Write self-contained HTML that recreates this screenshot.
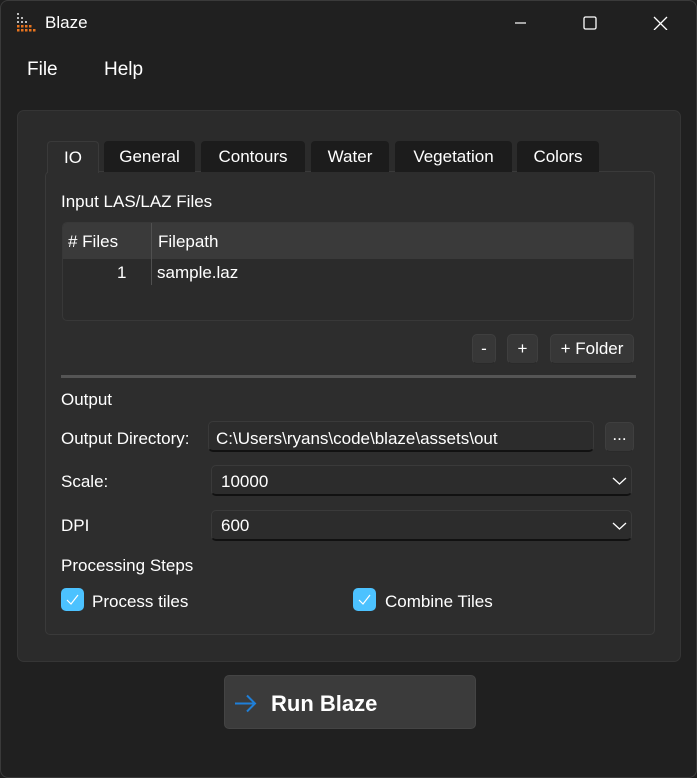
<!DOCTYPE html>
<html><head><style>
*{box-sizing:border-box;margin:0;padding:0}
body{width:697px;height:778px;background:#1f1f1f;font-family:"Liberation Sans",sans-serif;color:#fff;font-size:17px;position:relative;overflow:hidden}
.a{position:absolute}
.t{position:absolute;line-height:1;white-space:nowrap}
.win{left:0;top:0;width:697px;height:778px;border:1px solid #3a3a3a;border-radius:8px;background:#202020}
.tab{position:absolute;top:141px;height:31px;background:#1c1c1c;border-radius:4px 4px 0 0;text-align:center;line-height:31px;font-size:17px;color:#fff}
.btn{position:absolute;background:#373737;border:1px solid #3f3f3f;border-bottom-color:#2a2a2a;border-radius:5px;text-align:center;color:#fff}
.combo{position:absolute;background:#2c2c2c;border:1px solid #3a3a3a;border-bottom:2px solid #111;border-radius:5px}
.chk{position:absolute;width:23px;height:23px;background:#4cc2ff;border-radius:5px}
</style></head><body>
<div class="a win"></div>
<svg class="a" style="left:15px;top:12px" width="22" height="22" viewBox="0 0 22 22">
<g fill="#bbb"><rect x="2" y="1" width="2" height="2"/><rect x="2" y="5" width="2" height="2"/><rect x="6" y="5" width="2" height="2"/><rect x="2" y="9" width="2" height="2"/><rect x="6" y="9" width="2" height="2"/><rect x="10" y="9" width="2" height="2"/></g>
<g fill="#e8731e"><rect x="2" y="13" width="2.5" height="2.5"/><rect x="6" y="13" width="2.5" height="2.5"/><rect x="10" y="13" width="2.5" height="2.5"/><rect x="14" y="13" width="2.5" height="2.5"/><rect x="2" y="17" width="2.5" height="2.5"/><rect x="6" y="17" width="2.5" height="2.5"/><rect x="10" y="17" width="2.5" height="2.5"/><rect x="14" y="17" width="2.5" height="2.5"/><rect x="18" y="17" width="2.5" height="2.5"/></g></svg>
<div class="t" style="left:45px;top:14px;font-size:17px">Blaze</div>
<svg class="a" style="left:512px;top:16px" width="160" height="14"><line x1="3" y1="7" x2="14" y2="7" stroke="#fff" stroke-width="1.2"/><rect x="72" y="1" width="12" height="12" rx="1.5" fill="none" stroke="#fff" stroke-width="1.3"/><path d="M142 1 L155 14 M155 1 L142 14" stroke="#fff" stroke-width="1.3"/></svg>
<div class="t" style="left:27px;top:60px;font-size:19px">File</div>
<div class="t" style="left:104px;top:60px;font-size:19px">Help</div>
<div class="a" style="left:17px;top:110px;width:664px;height:552px;background:#2b2b2b;border:1px solid #353535;border-radius:7px"></div>
<div class="a" style="left:45px;top:171px;width:610px;height:464px;background:#2d2d2d;border:1px solid #3a3a3a;border-radius:5px"></div>
<div class="tab" style="left:47px;width:52px;background:#2d2d2d;border:1px solid #3a3a3a;border-bottom:none;height:32px">IO</div>
<div class="tab" style="left:104px;width:91px">General</div>
<div class="tab" style="left:201px;width:104px">Contours</div>
<div class="tab" style="left:311px;width:78px">Water</div>
<div class="tab" style="left:395px;width:117px">Vegetation</div>
<div class="tab" style="left:517px;width:82px">Colors</div>
<div class="t" style="left:61px;top:193px">Input LAS/LAZ Files</div>
<div class="a" style="left:62px;top:222px;width:572px;height:99px;background:#2b2b2b;border:1px solid #383838;border-radius:5px;overflow:hidden">
<div class="a" style="left:0;top:0;width:572px;height:36px;background:#3a3a3a"></div>
<div class="a" style="left:88px;top:0;width:1px;height:62px;background:#505050"></div>
</div>
<div class="t" style="left:68px;top:233px">#&nbsp;Files</div>
<div class="t" style="left:158px;top:233px">Filepath</div>
<div class="t" style="left:117px;top:264px">1</div>
<div class="t" style="left:157px;top:264px">sample.laz</div>
<div class="btn" style="left:472px;top:334px;width:24px;height:30px;line-height:28px">-</div>
<div class="btn" style="left:507px;top:334px;width:31px;height:30px;line-height:28px">+</div>
<div class="btn" style="left:550px;top:334px;width:84px;height:30px;line-height:28px;font-size:17px">+ Folder</div>
<div class="a" style="left:61px;top:375px;width:575px;height:3px;background:#555"></div>
<div class="t" style="left:61px;top:391px">Output</div>
<div class="t" style="left:61px;top:430px">Output Directory:</div>
<div class="combo" style="left:208px;top:421px;width:386px;height:31px"></div>
<div class="t" style="left:216px;top:430px">C:\Users\ryans\code\blaze\assets\out</div>
<div class="btn" style="left:605px;top:422px;width:29px;height:30px;line-height:24px">...</div>
<div class="t" style="left:61px;top:473px">Scale:</div>
<div class="combo" style="left:211px;top:465px;width:421px;height:31px"></div>
<div class="t" style="left:221px;top:473px">10000</div>
<div class="t" style="left:61px;top:517px">DPI</div>
<div class="combo" style="left:211px;top:510px;width:421px;height:31px"></div>
<div class="t" style="left:221px;top:517px">600</div>
<svg class="a" style="left:612px;top:476px" width="16" height="60"><path d="M1 2 L7.5 8 L14 2 M1 47 L7.5 53 L14 47" fill="none" stroke="#fff" stroke-width="1.3"/></svg>
<div class="t" style="left:61px;top:557px">Processing Steps</div>
<div class="chk" style="left:61px;top:588px"></div>
<div class="chk" style="left:353px;top:588px"></div>
<svg class="a" style="left:61px;top:588px" width="320" height="23"><path d="M6 12 L10 16 L17 7 M298 12 L302 16 L309 7" fill="none" stroke="#fff" stroke-width="1.2"/></svg>
<div class="t" style="left:92px;top:593px">Process tiles</div>
<div class="t" style="left:385px;top:593px">Combine Tiles</div>
<div class="btn" style="left:224px;top:675px;width:252px;height:54px;background:#3b3b3b;border-color:#444"></div>
<svg class="a" style="left:234px;top:694px" width="24" height="20"><path d="M1 9.5 L21 9.5 M13 1.5 L21 9.5 L13 17.5" fill="none" stroke="#1f7fd8" stroke-width="2"/></svg>
<div class="t" style="left:271px;top:693px;font-size:22px;font-weight:bold">Run Blaze</div>
</body></html>
